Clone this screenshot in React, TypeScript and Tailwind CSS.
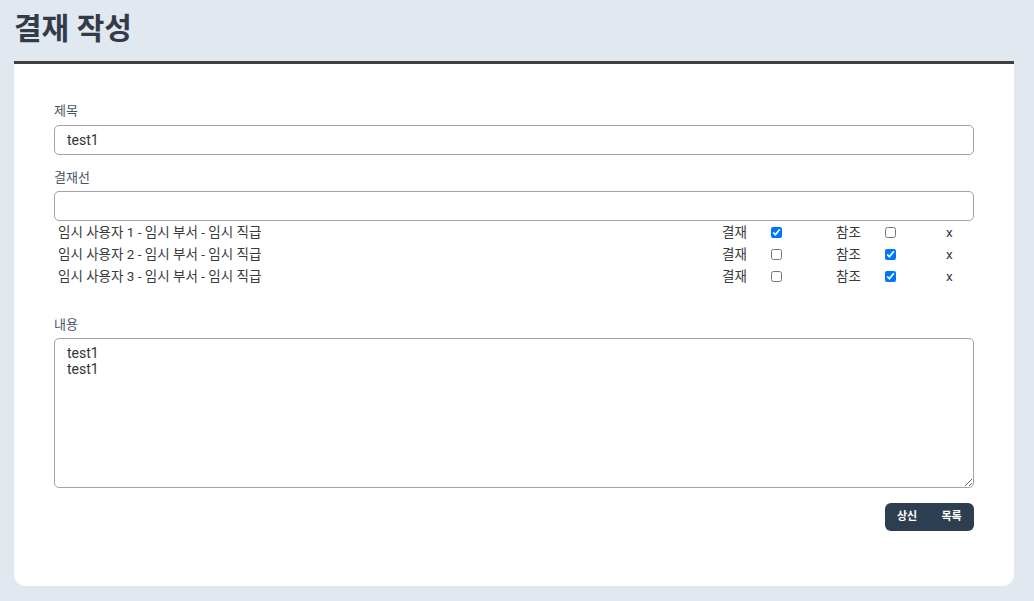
import React from "react";

const rows = [
  { name: "임시 사용자 1 - 임시 부서 - 임시 직급", a: true, r: false },
  { name: "임시 사용자 2 - 임시 부서 - 임시 직급", a: false, r: true },
  { name: "임시 사용자 3 - 임시 부서 - 임시 직급", a: false, r: true },
];

export default function App() {
  return (
    <div
      className="h-[601px] overflow-hidden bg-[#e2e8f0] px-[14px]"
      style={{ fontFamily: "Roboto, 'Noto Sans CJK KR', sans-serif" }}
    >
      <div className="w-[1000px]">
        <div className="h-[64px] border-b-[3px] border-[#404040] flex items-center">
          <h1 className="text-[30px] font-bold text-[#333b48] leading-none mt-[-4px]">결재 작성</h1>
        </div>
        <div className="bg-white rounded-b-xl px-10 pt-[37px] pb-[55px]">
          <label className="block text-[13px] leading-5 text-[#4b5563] mb-1">제목</label>
          <input
            readOnly
            value="test1"
            className="block w-full h-[30px] border border-[#a3a3a3] rounded-[5px] px-3 text-[14px] text-[#333] outline-none"
          />
          <label className="block text-[13px] leading-5 text-[#4b5563] mt-[13px] mb-[3px]">결재선</label>
          <input
            readOnly
            value=""
            className="block w-full h-[30px] border border-[#a3a3a3] rounded-[5px] px-3 text-[14px] text-[#333] outline-none"
          />
          <div className="flex flex-col">
            {rows.map((row, i) => (
              <div key={i} className="flex items-center h-[22px] text-[13.5px] text-[#3a3a3a]">
                <div className="flex-1 pl-1">{row.name}</div>
                <div className="w-[49px] pl-px">결재</div>
                <div className="w-[66px] flex items-center pl-px">
                  <input type="checkbox" readOnly checked={row.a} className="m-0 w-[11px] h-[11px]" />
                </div>
                <div className="w-[49px]">참조</div>
                <div className="w-[11px] flex items-center">
                  <input type="checkbox" readOnly checked={row.r} className="m-0 w-[11px] h-[11px]" />
                </div>
                <div className="w-[78px] pl-[50px]">x</div>
              </div>
            ))}
          </div>
          <label className="block text-[13px] leading-5 text-[#4b5563] mt-[28px] mb-[3px]">내용</label>
          <textarea
            readOnly
            value={"test1\ntest1"}
            className="block w-full h-[150px] border border-[#a3a3a3] rounded-[5px] px-3 pt-[6px] text-[14px] leading-[16px] text-[#333] outline-none"
          />
          <div className="flex justify-end mt-[15px]">
            <div className="flex h-[28px] rounded-md bg-[#2c3e50] overflow-hidden">
              <button className="w-[44px] text-[11px] font-bold text-white">상신</button>
              <button className="w-[45px] text-[11px] font-bold text-white">목록</button>
            </div>
          </div>
        </div>
      </div>
    </div>
  );
}
